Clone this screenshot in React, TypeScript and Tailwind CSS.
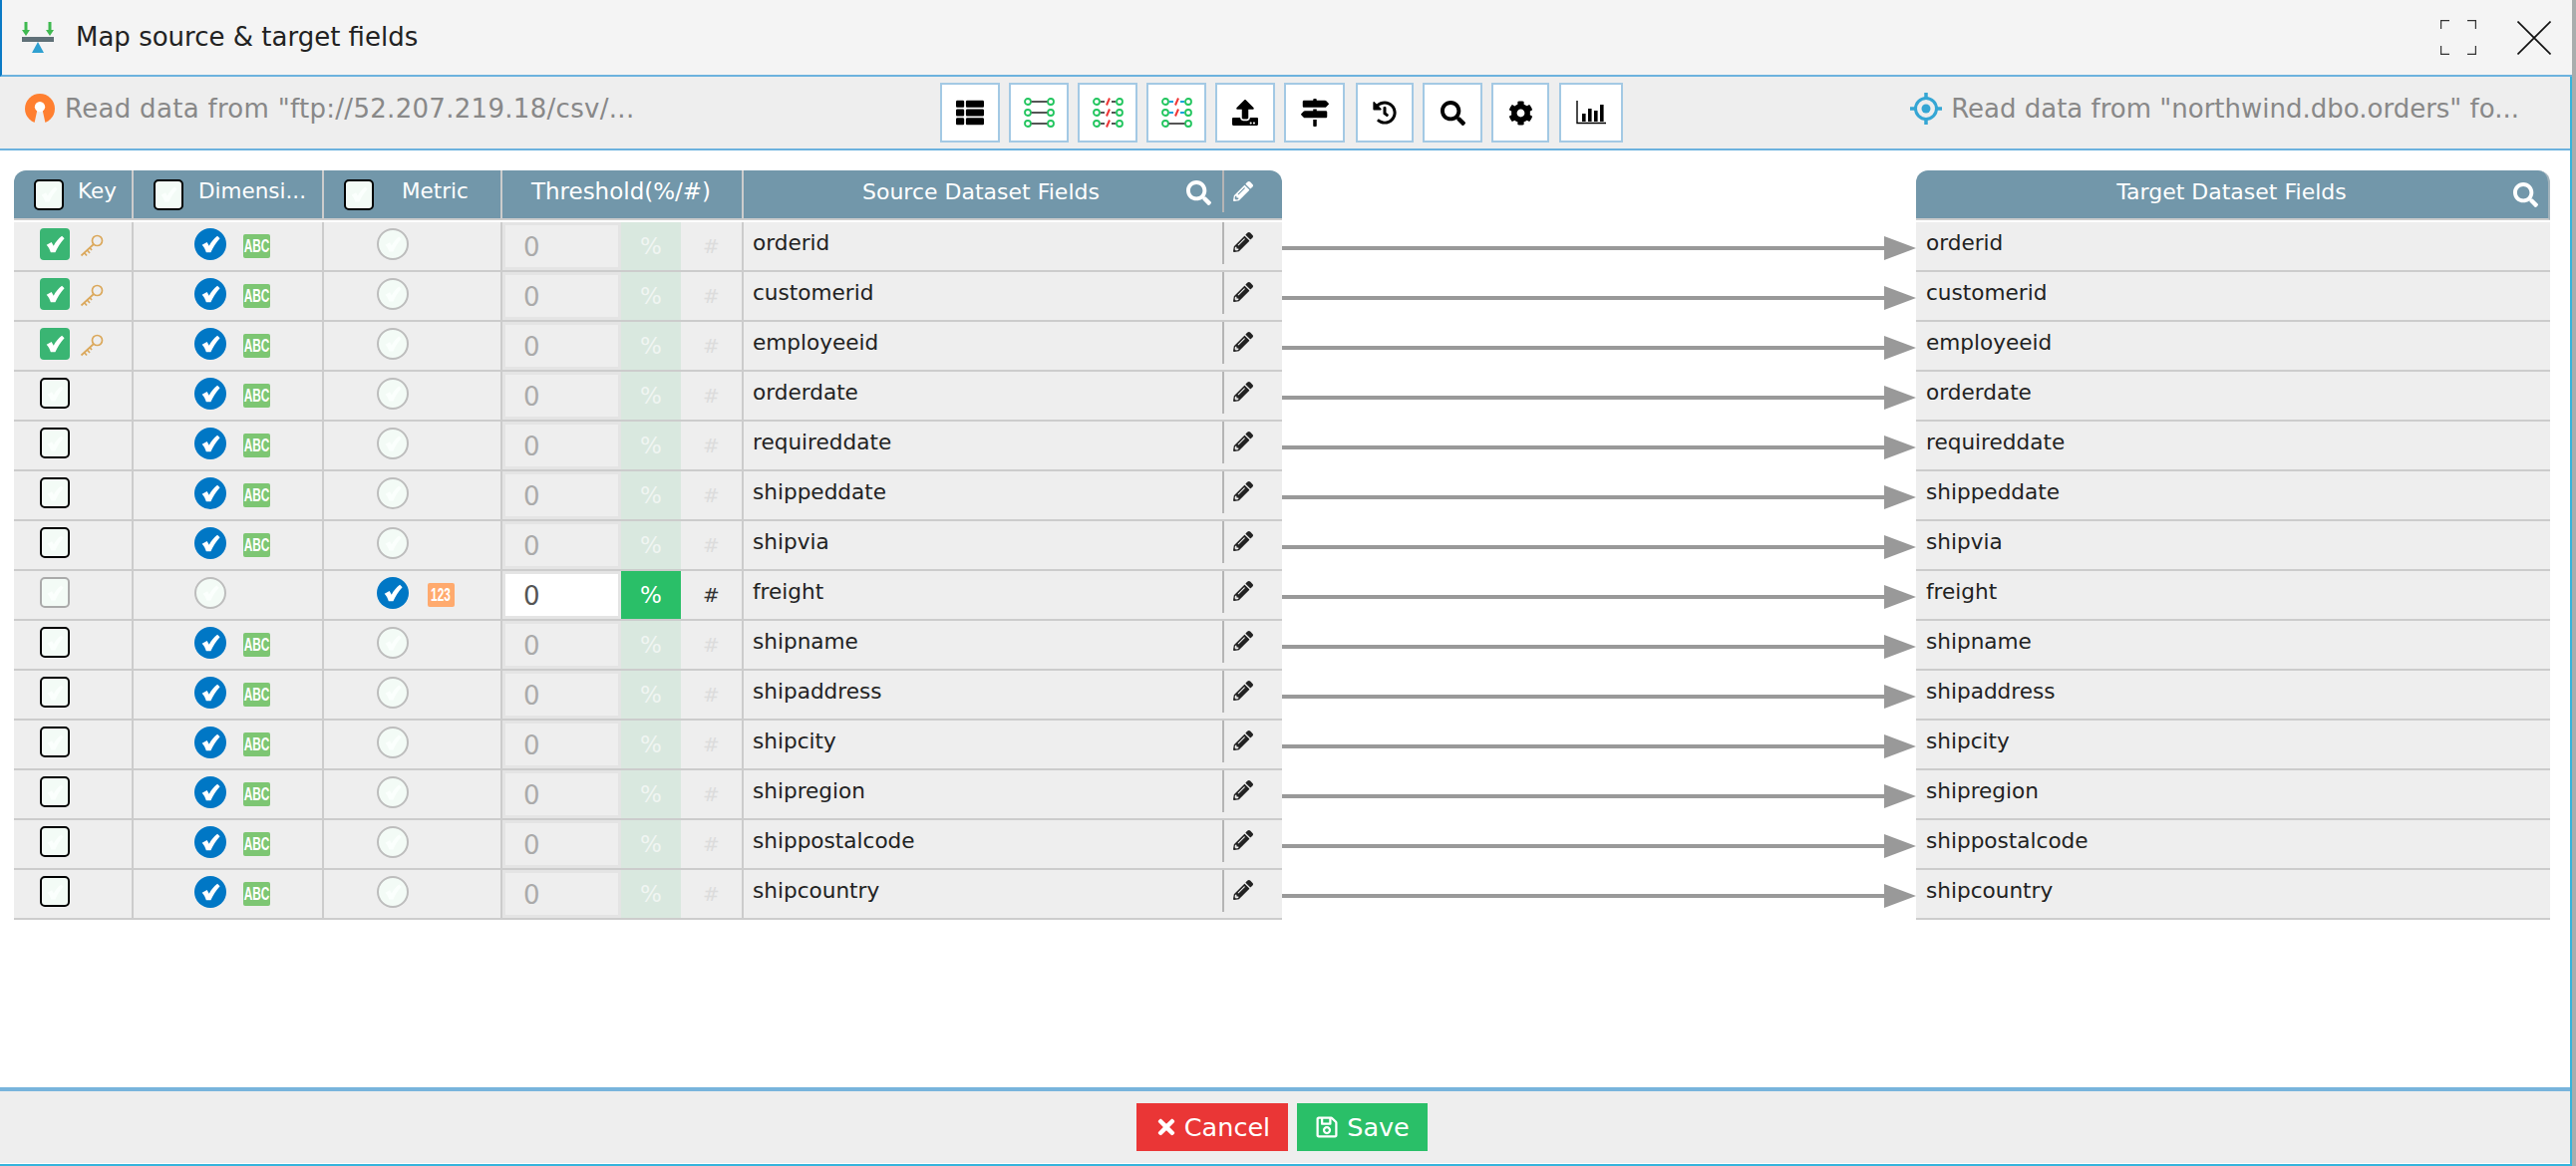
import { FaThList, FaUpload, FaMapSigns, FaHistory, FaSearch, FaCog, FaPencilAlt, FaTimes, FaRegSave } from "react-icons/fa";

type Field = { name: string; key?: boolean; metric?: boolean };

const fields: Field[] = [
  { name: "orderid", key: true },
  { name: "customerid", key: true },
  { name: "employeeid", key: true },
  { name: "orderdate" },
  { name: "requireddate" },
  { name: "shippeddate" },
  { name: "shipvia" },
  { name: "freight", metric: true },
  { name: "shipname" },
  { name: "shipaddress" },
  { name: "shipcity" },
  { name: "shipregion" },
  { name: "shippostalcode" },
  { name: "shipcountry" },
];

function Tick({ className }: { className: string }) {
  return (
    <svg viewBox="0 0 24 24" className={className}>
      <path d="M2 13 L8 9.5 L10.5 14 C13 9 16.5 5 20.5 2 L23.5 5 C19 10 15 16 12.5 22 L7 22 C6 18.5 4.5 15.5 2 13 Z" fill="currentColor" />
    </svg>
  );
}

function Box({ checked, dim }: { checked?: boolean; dim?: boolean }) {
  if (checked) {
    return (
      <span className="flex h-[32px] w-[30px] shrink-0 items-center justify-center rounded-[4px] bg-[#3ab573]">
        <Tick className="h-[20px] w-[20px] text-white" />
      </span>
    );
  }
  return (
    <span className={`flex h-[31px] w-[30px] shrink-0 items-center justify-center rounded-[5px] border-2 bg-[#f3fbf6] ${dim ? "border-[#aaaaaa]" : "border-black"}`}>
      <Tick className="h-[18px] w-[18px] text-[#fbfffd]" />
    </span>
  );
}

function Radio({ checked }: { checked?: boolean }) {
  if (checked) {
    return (
      <span className="flex h-[32px] w-[32px] shrink-0 items-center justify-center rounded-full bg-[#0077c5]">
        <Tick className="h-[20px] w-[20px] text-white" />
      </span>
    );
  }
  return (
    <span className="flex h-[32px] w-[32px] shrink-0 items-center justify-center rounded-full border-2 border-[#bdbdbd] bg-[#f3fbf6]">
      <Tick className="h-[18px] w-[18px] text-[#fbfffd]" />
    </span>
  );
}

function Badge({ label, orange }: { label: string; orange?: boolean }) {
  return (
    <span className={`flex h-[24px] w-[27px] shrink-0 items-center justify-center overflow-hidden rounded-[2px] font-['Liberation_Sans',sans-serif] text-[18px] font-bold text-white ${orange ? "bg-[#ffaa6e]" : "bg-[#7dc673]"}`}>
      <span className="scale-x-[0.66]">{label}</span>
    </span>
  );
}

function KeyIcon() {
  return (
    <svg viewBox="0 0 24 24" className="h-[24px] w-[24px]" fill="none" stroke="#dba85b" strokeWidth="1.7">
      <circle cx="17.5" cy="6.5" r="5" />
      <path d="M14 10 L1.5 21.5 M4.5 18.5 L7 21.5 M7.5 16 L10 19 M10 13.5 L12 16" />
    </svg>
  );
}

function LinkIcon({ rows }: { rows: ("plain" | "red" | "blue")[] }) {
  return (
    <svg viewBox="0 0 31 30" className="h-[30px] w-[31px]" fill="none">
      {rows.map((kind, i) => {
        const y = 4 + i * 11;
        return (
          <g key={i}>
            <circle cx="4" cy={y} r="3" stroke="#22c55e" strokeWidth="1.8" />
            <circle cx="27" cy={y} r="3" stroke="#22c55e" strokeWidth="1.8" />
            {kind === "plain" ? (
              <path d={`M7.5 ${y} H23.5`} stroke="#555" strokeWidth="2" />
            ) : (
              <>
                <path d={`M8 ${y} H12 M19 ${y} H23`} stroke={kind === "blue" ? "#0ea5d9" : "#555"} strokeWidth="2" />
                <path d={`M14 ${y + 3.5} L17 ${y - 3.5}`} stroke="#ef3535" strokeWidth="2" />
              </>
            )}
          </g>
        );
      })}
    </svg>
  );
}

function BarsIcon() {
  return (
    <svg viewBox="0 0 30 24" className="h-[24px] w-[30px]">
      <path d="M1 0 V22.5 H30" fill="none" stroke="#000" strokeWidth="1.4" />
      <rect x="6" y="13" width="3.6" height="8" />
      <rect x="12" y="8" width="3.6" height="13" />
      <rect x="18" y="10" width="3.6" height="11" />
      <rect x="24" y="4" width="3.6" height="17" />
    </svg>
  );
}

function TitleIcon() {
  return (
    <svg viewBox="0 0 32 31" className="h-[31px] w-[32px]">
      <path d="M2.5 0 H5.5 V8 H8 L4 14 L0 8 H2.5 Z M26.5 0 H29.5 V8 H32 L28 14 L24 8 H26.5 Z" fill="#3fb950" />
      <rect x="0" y="15" width="32" height="5" fill="#5f7077" />
      <path d="M16 20 L22 31 H10 Z" fill="#2fa0d0" />
    </svg>
  );
}

function SourceIcon() {
  return (
    <svg viewBox="0 0 32 32" className="h-[30px] w-[32px] shrink-0">
      <circle cx="16" cy="16" r="16" fill="#ff7f30" />
      <path d="M13.5 16 L10 32 H22 L18.5 16 Z" fill="#eeeeee" />
      <circle cx="16" cy="14" r="5.5" fill="#ffffff" />
    </svg>
  );
}

function TargetIcon() {
  return (
    <svg viewBox="0 0 32 32" className="h-[32px] w-[32px] shrink-0" fill="none" stroke="#35a6d4">
      <circle cx="16" cy="16" r="10.5" strokeWidth="3" />
      <circle cx="16" cy="16" r="4.5" fill="#35a6d4" stroke="none" />
      <path d="M16 0 V6 M16 26 V32 M0 16 H6 M26 16 H32" strokeWidth="3.5" />
    </svg>
  );
}

function FullscreenIcon() {
  return (
    <svg viewBox="0 0 36 35" className="h-[35px] w-[36px]" fill="none" stroke="#333" strokeWidth="1.2">
      <path d="M9 .6 H.6 V9 M27 .6 H35.4 V9 M.6 26 V34.4 H9 M35.4 26 V34.4 H27" />
    </svg>
  );
}

function CloseIcon() {
  return (
    <svg viewBox="0 0 34 34" className="h-[34px] w-[34px]" fill="none" stroke="#111" strokeWidth="1.6">
      <path d="M.5 .5 L33.5 33.5 M33.5 .5 L.5 33.5" />
    </svg>
  );
}

function Arrow() {
  return (
    <svg viewBox="0 0 636 24" className="h-[24px] w-[636px]">
      <rect x="0" y="10" width="606" height="4" fill="#999999" />
      <path d="M604 0 L636 12 L604 24 Z" fill="#999999" />
    </svg>
  );
}

function ToolButton({ size, children }: { size: string; children: React.ReactNode }) {
  return (
    <button className={`flex h-[60px] items-center justify-center border-2 border-[#a3c9e4] bg-white text-black ${size}`}>
      {children}
    </button>
  );
}

function SourceRow({ field }: { field: Field }) {
  const on = !!field.metric;
  return (
    <div className="flex h-[50px] border-b-2 border-[#cccccc] bg-[#eeeeee] text-[21.6px] text-[#222222]">
      <div className="flex w-[120px] items-start gap-[10px] border-r-2 border-[#cccccc] pl-[26px] pt-[6px]">
        <Box checked={field.key} dim={on} />
        {field.key && <span className="pt-[6px]"><KeyIcon /></span>}
      </div>
      <div className="flex w-[191px] items-start gap-[17px] border-r-2 border-[#cccccc] pl-[61px] pt-[6px]">
        <Radio checked={!on} />
        {!on && <span className="pt-[6px]"><Badge label="ABC" /></span>}
      </div>
      <div className="flex w-[179px] items-start gap-[19px] border-r-2 border-[#cccccc] pl-[53px] pt-[6px]">
        <Radio checked={on} />
        {on && <span className="pt-[6px]"><Badge label="123" orange /></span>}
      </div>
      <div className={`flex w-[119px] items-center border-[3px] border-[#e4e4e4] pl-[18px] pt-[2px] text-[26px] ${on ? "bg-white text-[#555555]" : "bg-[#eeeeee] text-[#aaaaaa]"}`}>
        0
      </div>
      <div className={`flex w-[60px] items-center justify-center text-[23px] ${on ? "bg-[#2abf68] text-white" : "bg-[#d9e8df] text-[#f0f5f2]"}`}>
        %
      </div>
      <div className={`flex w-[63px] items-center justify-center border-r-2 border-[#cccccc] text-[20px] ${on ? "text-[#333333]" : "text-[#dcdcdc]"}`}>
        #
      </div>
      <div className="flex w-[480px] items-start pl-[9px] pt-[5px]">{field.name}</div>
      <div className="h-[42px] w-[2px] self-start bg-[#b5b5b5]" />
      <div className="flex flex-1 items-start pl-[9px] pt-[10px] text-[#222222]">
        <FaPencilAlt size={20} />
      </div>
    </div>
  );
}

export default function App() {
  return (
    <div className="flex h-[1170px] w-[2584px] overflow-hidden bg-white font-['DejaVu_Sans',sans-serif]">
      <div className="flex w-[2580px] flex-col">
        {/* Title */}
        <div className="flex h-[77px] shrink-0 items-center border-b-2 border-l-2 border-b-[#6cb2de] border-l-[#0a7ac5] bg-[#f4f4f4] pl-[20px] pr-[21px]">
          <TitleIcon />
          <span className="ml-[22px] text-[26px] text-[#222222]">Map source &amp; target fields</span>
          <span className="ml-auto"><FullscreenIcon /></span>
          <span className="ml-[41px]"><CloseIcon /></span>
        </div>

        <div className="flex flex-1 flex-col border-r-2 border-[#36b4dc]">
          {/* Toolbar */}
          <div className="flex h-[74px] shrink-0 items-center border-b-2 border-[#6cb2de] bg-[#eeeeee]">
            <div className="flex w-[943px] items-center gap-[9px] pb-[8px] pl-[24px] text-[26px] tracking-[0.3px] text-[#888888]">
              <SourceIcon />
              <span>Read data from "ftp://52.207.219.18/csv/...</span>
            </div>
            <div className="flex gap-[9px]">
              <ToolButton size="w-[60px]"><FaThList size={28} /></ToolButton>
              <ToolButton size="w-[60px]"><LinkIcon rows={["plain", "plain", "plain"]} /></ToolButton>
              <ToolButton size="w-[60px]"><LinkIcon rows={["red", "red", "red"]} /></ToolButton>
              <ToolButton size="w-[60px]"><LinkIcon rows={["blue", "blue", "plain"]} /></ToolButton>
              <ToolButton size="w-[60px]"><FaUpload size={26} /></ToolButton>
              <ToolButton size="w-[61px]"><FaMapSigns size={28} /></ToolButton>
              <ToolButton size="ml-[2px] w-[58px]"><FaHistory size={24} /></ToolButton>
              <ToolButton size="w-[60px]"><FaSearch size={25} /></ToolButton>
              <ToolButton size="w-[58px]"><FaCog size={25} /></ToolButton>
              <ToolButton size="ml-[1px] w-[64px]"><BarsIcon /></ToolButton>
            </div>
            <div className="ml-auto flex items-center gap-[9px] pb-[8px] pr-[51px] text-[26px] text-[#888888]">
              <TargetIcon />
              <span>Read data from "northwind.dbo.orders" fo...</span>
            </div>
          </div>

          {/* Mapping area */}
          <div className="flex flex-1 bg-white pl-[14px] pt-[20px]">
            <div className="w-[1272px] shrink-0">
              <div className="flex h-[50px] rounded-t-[12px] border-b-2 border-[#cccccc] bg-[#7297aa] text-[21.5px] text-white">
                <div className="flex w-[120px] items-center gap-[14px] border-r-2 border-[#cccccc] pl-[20px]">
                  <Box />
                  <span className="pb-[6px]">Key</span>
                </div>
                <div className="flex w-[191px] items-center gap-[15px] border-r-2 border-[#cccccc] pl-[20px]">
                  <Box />
                  <span className="pb-[6px]">Dimensi...</span>
                </div>
                <div className="flex w-[179px] items-center gap-[28px] border-r-2 border-[#cccccc] pl-[20px]">
                  <Box />
                  <span className="pb-[6px]">Metric</span>
                </div>
                <div className="flex w-[242px] items-center justify-center border-r-2 border-[#cccccc] pb-[6px] pr-[2px] text-[23px]">Threshold(%/#)</div>
                <div className="flex w-[480px] items-center pb-[6px] pl-[119px] text-[22px]">
                  <span>Source Dataset Fields</span>
                  <span className="ml-auto pr-[11px] pt-[2px]"><FaSearch size={25} /></span>
                </div>
                <div className="h-[42px] w-[2px] bg-[#b5b5b5]" />
                <div className="pl-[9px] pt-[11px]"><FaPencilAlt size={20} /></div>
              </div>
              <div className="mt-[2px]">
                {fields.map((f) => (
                  <SourceRow key={f.name} field={f} />
                ))}
              </div>
            </div>

            <div className="w-[636px] shrink-0 pt-[52px]">
              {fields.map((f) => (
                <div key={f.name} className="h-[50px] pt-[14px]">
                  <Arrow />
                </div>
              ))}
            </div>

            <div className="w-[636px] shrink-0">
              <div className="flex h-[50px] items-center rounded-t-[12px] border-b-2 border-r-2 border-b-[#cccccc] border-r-[#a5b5bd] bg-[#7297aa] text-[22px] text-white">
                <span className="flex-1 pb-[6px] pl-[34px] text-center">Target Dataset Fields</span>
                <span className="pr-[10px]"><FaSearch size={25} /></span>
              </div>
              <div className="mt-[2px]">
                {fields.map((f) => (
                  <div key={f.name} className="flex h-[50px] items-start border-b-2 border-[#cccccc] bg-[#eeeeee] pl-[10px] pt-[5px] text-[21.6px] text-[#222222]">
                    {f.name}
                  </div>
                ))}
              </div>
            </div>
          </div>

          {/* Footer */}
          <div className="flex h-[76px] shrink-0 justify-center gap-[9px] border-t-4 border-[#78b4dc] bg-[#eeeeee] pr-[6px] pt-[12px]">
            <button className="flex h-[48px] w-[152px] items-center justify-center gap-[6px] bg-[#ea3636] text-[25.5px] text-white">
              <FaTimes size={24} />
              Cancel
            </button>
            <button className="flex h-[48px] w-[131px] items-center justify-center gap-[8px] bg-[#2abf68] text-[25.5px] text-white">
              <FaRegSave size={24} />
              Save
            </button>
          </div>
          <div className="h-[3px] shrink-0 border-b-2 border-[#36b4dc] bg-white" />
        </div>
      </div>
      <div className="w-[4px] bg-[#a9adad]" />
    </div>
  );
}
